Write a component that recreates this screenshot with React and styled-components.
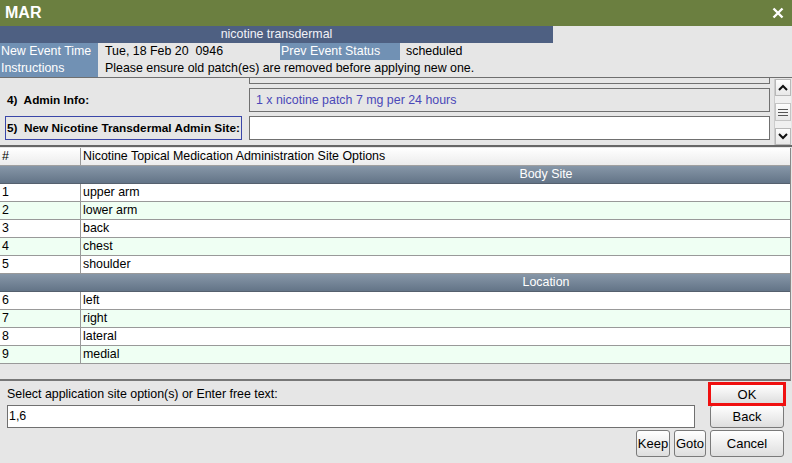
import styled, { createGlobalStyle } from 'styled-components';

const GlobalStyle = createGlobalStyle`
  html, body {
    margin: 0;
    padding: 0;
    background: #e6e6e6;
  }
  * {
    box-sizing: border-box;
  }
`;

const Window = styled.div`
  width: 792px;
  height: 463px;
  background: #e6e6e6;
  font-family: 'Liberation Sans', Arial, sans-serif;
  font-size: 12.4px;
  color: #000;
  display: flex;
  flex-direction: column;
  overflow: hidden;
  & > * {
    flex: none;
  }
`;

const TitleBar = styled.div`
  height: 26px;
  background: #6b7f40;
  display: flex;
  align-items: center;
  justify-content: space-between;
  padding: 0 8px 0 5px;
  color: #fff;
`;

const Title = styled.span`
  font-size: 16px;
  font-weight: bold;
`;

const DrugBar = styled.div`
  height: 17px;
  display: flex;
`;

const DrugName = styled.div`
  width: 553px;
  background: #4e6082;
  color: #f2f2f8;
  text-align: center;
  line-height: 17px;
`;

const InfoGrid = styled.div`
  display: grid;
  grid-template-columns: 98px 182px 120px 1fr;
  grid-auto-rows: 17px;
`;

const InfoLabel = styled.div`
  background: #7191b4;
  color: #fff;
  line-height: 17px;
  padding-left: 1px;
  white-space: nowrap;
`;

const InfoValue = styled.div`
  line-height: 17px;
  padding-left: ${(p) => (p.$tight ? '7px' : '6px')};
  white-space: pre;
  grid-column: ${(p) => p.$span || 'auto'};
`;

const FormPanel = styled.div`
  height: 70px;
  border-top: 1px solid #6f6f6f;
  border-bottom: 2px solid #666;
  display: flex;
`;

const FormRows = styled.div`
  flex: 1;
  display: flex;
  flex-direction: column;
  overflow: hidden;
`;

const FormRow = styled.div`
  display: flex;
  align-items: ${(p) => (p.$clip ? 'flex-end' : 'center')};
  height: ${(p) => p.$h}px;
  margin-top: ${(p) => p.$mt || 0}px;
  overflow: hidden;
`;

const LabelCell = styled.div`
  width: 249px;
  padding-left: 5px;
  flex: none;
`;

const FieldLabel = styled.span`
  display: inline-block;
  font-weight: bold;
  font-size: 11.8px;
  white-space: nowrap;
  height: 24px;
  line-height: 22px;
  padding: 0 1px;
  border: 1px solid ${(p) => (p.$focus ? '#3a46a8' : 'transparent')};
`;

const Field = styled.div`
  width: 521px;
  height: 24px;
  flex: none;
  border: 1px solid #707070;
  background: ${(p) => (p.$white ? '#fff' : '#e6e6e6')};
  color: #4a48b8;
  line-height: 22px;
  padding-left: 6px;
`;

const ScrollBar = styled.div`
  width: 17px;
  margin: 1px 1px 0 4px;
  background: #f0f0f0;
  display: flex;
  flex-direction: column;
  justify-content: space-between;
  border-left: 1px solid #ccc;
`;

const ScrollButton = styled.div`
  height: 17px;
  background: linear-gradient(#fdfdfd, #e8e8e8);
  border: 1px solid #b8b8b8;
  display: flex;
  align-items: center;
  justify-content: center;
`;

const Thumb = styled(ScrollButton)`
  height: 18px;
  border-color: #c4c4c4;
`;

const Table = styled.div`
  margin-top: 1px;
  height: 233px;
  width: 791px;
  border-right: 1px solid #888;
  border-bottom: 2px solid #777;
  display: flex;
  flex-direction: column;
  & > * {
    flex: none;
  }
`;

const Row = styled.div`
  display: grid;
  grid-template-columns: 80px 1fr;
  height: 18px;
  border-bottom: 1px solid #999;
  background: ${(p) => (p.$alt ? '#effff3' : '#fff')};
`;

const HeadRow = styled(Row)`
  background: linear-gradient(#ffffff, #ececec);
  border-bottom: 1px solid #a0a0a0;
`;

const Cell = styled.div`
  padding-left: 2px;
  line-height: 17px;
  border-left: ${(p) => (p.$divided ? '1px solid #999' : 'none')};
  white-space: nowrap;
`;

const GroupRow = styled.div`
  height: 18px;
  background: linear-gradient(#8797a8, #637487);
  border-bottom: 1px solid #55606e;
  color: #fff;
  text-align: center;
  line-height: 17px;
  padding-left: 302px;
`;

const TableFill = styled.div`
  flex: 1 1 auto !important;
  background: #e6e6e6;
`;

const Footer = styled.div`
  flex: 1 1 auto !important;
  display: grid;
  grid-template-columns: 1fr 34px 32px 74px;
  grid-template-rows: 22px 24px 28px;
  column-gap: 4px;
  row-gap: 1px;
  padding: 1px 8px 0 7px;
`;

const PromptLabel = styled.div`
  grid-column: 1 / 4;
  align-self: end;
  line-height: 19px;
`;

const TextInput = styled.div`
  grid-column: 1 / 4;
  margin-right: 11px;
  height: 23px;
  background: #fff;
  border: 1px solid #707070;
  line-height: 21px;
  padding-left: 1px;
`;

const Button = styled.button`
  grid-column: ${(p) => p.$col};
  position: relative;
  z-index: ${(p) => (p.$active ? 1 : 0)};
  font-family: 'Liberation Sans', Arial, sans-serif;
  font-size: 13px;
  color: #000;
  padding: 0;
  height: ${(p) => p.$h || 23}px;
  background: linear-gradient(#ffffff, #dedede);
  border: ${(p) => (p.$active ? '3px solid #f01010' : '1px solid #7a7a7a')};
  border-radius: ${(p) => (p.$active ? '0' : '3px')};
  margin-left: ${(p) => (p.$active ? '-2px' : '0')};
  margin-right: ${(p) => (p.$active ? '-2px' : '0')};
`;

const bodySites = ['upper arm', 'lower arm', 'back', 'chest', 'shoulder'];
const locations = ['left', 'right', 'lateral', 'medial'];

const Chevron = ({ up }) => (
  <svg width="10" height="7" viewBox="0 0 10 7">
    <path
      d={up ? 'M1 6 L5 2 L9 6' : 'M1 1 L5 5 L9 1'}
      fill="none"
      stroke="#111"
      strokeWidth="2"
    />
  </svg>
);

const App = () => {
  return (
    <>
      <GlobalStyle />
      <Window>
        <TitleBar>
          <Title>MAR</Title>
          <svg width="12" height="12" viewBox="0 0 12 12">
            <path d="M1.5 1.5 L10.5 10.5 M10.5 1.5 L1.5 10.5" stroke="#fff" strokeWidth="2.4" />
          </svg>
        </TitleBar>

        <DrugBar>
          <DrugName>nicotine transdermal</DrugName>
        </DrugBar>

        <InfoGrid>
          <InfoLabel>New Event Time</InfoLabel>
          <InfoValue $tight>Tue, 18 Feb 20  0946</InfoValue>
          <InfoLabel>Prev Event Status</InfoLabel>
          <InfoValue>scheduled</InfoValue>
          <InfoLabel>Instructions</InfoLabel>
          <InfoValue $tight $span="2 / 5">
            Please ensure old patch(es) are removed before applying new one.
          </InfoValue>
        </InfoGrid>

        <FormPanel>
          <FormRows>
            <FormRow $clip $h={6}>
              <LabelCell />
              <Field />
            </FormRow>
            <FormRow $h={24} $mt={4}>
              <LabelCell>
                <FieldLabel>4)&nbsp; Admin Info:</FieldLabel>
              </LabelCell>
              <Field>1 x nicotine patch 7 mg per 24 hours</Field>
            </FormRow>
            <FormRow $h={24} $mt={4}>
              <LabelCell>
                <FieldLabel $focus>5)&nbsp; New Nicotine Transdermal Admin Site:</FieldLabel>
              </LabelCell>
              <Field $white />
            </FormRow>
          </FormRows>
          <ScrollBar>
            <ScrollButton>
              <Chevron up />
            </ScrollButton>
            <Thumb>
              <svg width="10" height="9" viewBox="0 0 10 9">
                <path d="M0 1.5 H10 M0 4.5 H10 M0 7.5 H10" stroke="#555" strokeWidth="1" />
              </svg>
            </Thumb>
            <ScrollButton>
              <Chevron />
            </ScrollButton>
          </ScrollBar>
        </FormPanel>

        <Table>
          <HeadRow>
            <Cell>#</Cell>
            <Cell $divided>Nicotine Topical Medication Administration Site Options</Cell>
          </HeadRow>
          <GroupRow>Body Site</GroupRow>
          {bodySites.map((site, i) => (
            <Row key={site} $alt={i % 2 === 1}>
              <Cell>{i + 1}</Cell>
              <Cell $divided>{site}</Cell>
            </Row>
          ))}
          <GroupRow>Location</GroupRow>
          {locations.map((loc, i) => (
            <Row key={loc} $alt={i % 2 === 1}>
              <Cell>{i + 6}</Cell>
              <Cell $divided>{loc}</Cell>
            </Row>
          ))}
          <TableFill />
        </Table>

        <Footer>
          <PromptLabel>Select application site option(s) or Enter free text:</PromptLabel>
          <Button $col="4" $active $h={24}>OK</Button>
          <TextInput>1,6</TextInput>
          <Button $col="4">Back</Button>
          <Button $col="2" $h={27}>Keep</Button>
          <Button $col="3" $h={27}>Goto</Button>
          <Button $col="4" $h={27}>Cancel</Button>
        </Footer>
      </Window>
    </>
  );
};

export default App;
